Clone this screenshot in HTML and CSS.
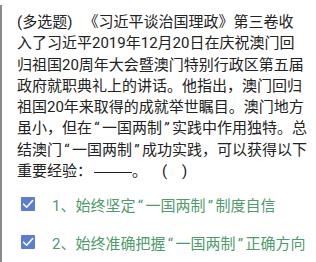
FILE: index.html
```html
<!DOCTYPE html>
<html lang="zh">
<head>
<meta charset="utf-8">
<link rel="stylesheet" href="styles.css">
</head>
<body>
<div class="card">
  <div class="question">
    <div class="line">(多选题)&nbsp;&nbsp;&nbsp;《习近平谈治国理政》第三卷收</div>
    <div class="line">入了习近平2019年12月20日在庆祝澳门回</div>
    <div class="line">归祖国20周年大会暨澳门特别行政区第五届</div>
    <div class="line">政府就职典礼上的讲话。他指出，澳门回归</div>
    <div class="line">祖国20年来取得的成就举世瞩目。澳门地方</div>
    <div class="line">虽小，但在<span class="q">“</span>一国两制<span class="q">”</span>实践中作用独特。总</div>
    <div class="line">结澳门<span class="q">“</span>一国两制<span class="q">”</span>成功实践，可以获得以下</div>
    <div class="line">重要经验：<span class="blank"></span>。&nbsp;&nbsp;&nbsp;&nbsp;(&nbsp;&nbsp;&nbsp;&nbsp;)</div>
  </div>
  <div class="option">
    <span class="box"><svg viewBox="0 0 14 14" width="14" height="14"><path d="M2.6 7.2 L5.6 10.2 L11.6 3.6" fill="none" stroke="#fff" stroke-width="1.6" stroke-linecap="round" stroke-linejoin="round"/></svg></span>
    <span class="label">1、始终坚定<span class="q">“</span>一国两制<span class="q">”</span>制度自信</span>
  </div>
  <div class="option">
    <span class="box"><svg viewBox="0 0 14 14" width="14" height="14"><path d="M2.6 7.2 L5.6 10.2 L11.6 3.6" fill="none" stroke="#fff" stroke-width="1.6" stroke-linecap="round" stroke-linejoin="round"/></svg></span>
    <span class="label">2、始终准确把握<span class="q">“</span>一国两制<span class="q">”</span>正确方向</span>
  </div>
</div>
</body>
</html>
```
FILE: styles.css
```css
html, body {
  margin: 0;
  padding: 0;
  background: #fff;
}
body {
  font-family: Roboto, "Noto Sans CJK SC", sans-serif;
  font-size: 15px;
  color: #222;
}
.card {
  margin-top: 5px;
  border-left: 2px solid #8a8a8a;
  padding: 7px 0 0 15px;
  height: 257px;
  box-sizing: border-box;
}
.question .line {
  line-height: 21.3px;
  white-space: nowrap;
}
.q {
  display: inline-block;
  width: 10px;
  text-align: center;
}
.blank {
  display: inline-block;
  width: 38px;
  border-bottom: 1px solid #222;
  vertical-align: 3px;
  margin-left: 2px;
}
.option {
  display: flex;
  align-items: center;
  height: 38px;
}
.option:first-of-type {
  margin-top: 0;
}
.question + .option {
  margin-top: 3px;
}
.box {
  width: 14px;
  height: 14px;
  margin-left: 4px;
  margin-right: 17px;
  background: #5b7dd8;
  border-radius: 1px;
  display: flex;
}
.label {
  color: #4e9b6c;
  white-space: nowrap;
}
```
